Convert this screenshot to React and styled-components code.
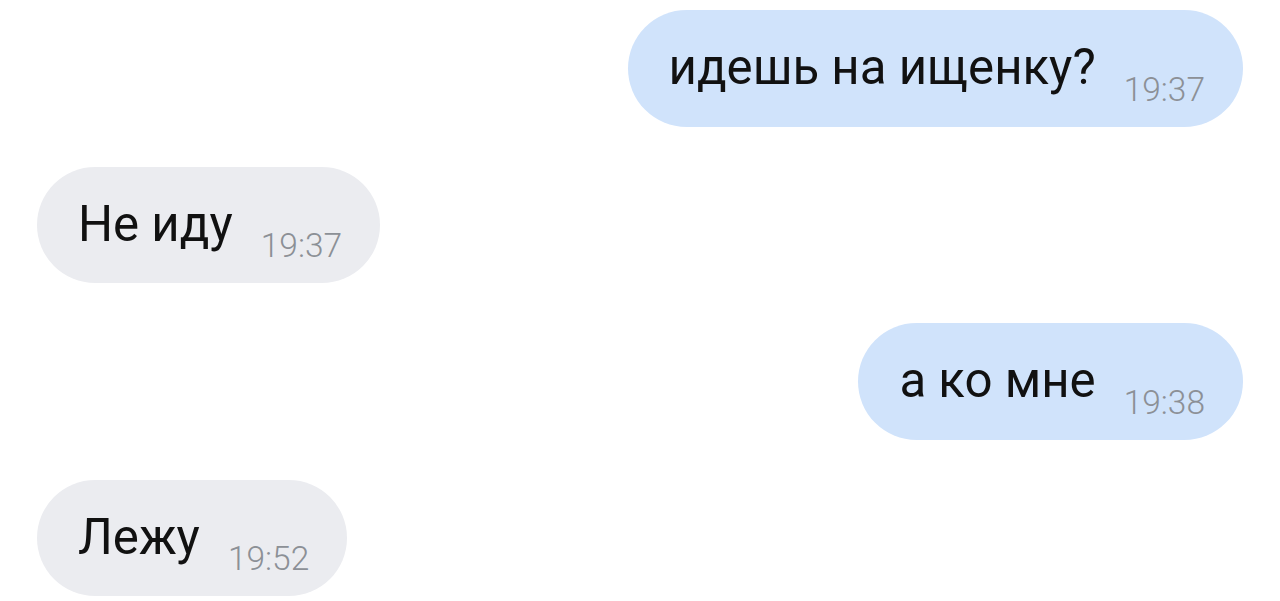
import React from "react";
import styled, { createGlobalStyle } from "styled-components";

const GlobalStyle = createGlobalStyle`
  html, body {
    margin: 0;
    padding: 0;
    background: #ffffff;
  }
  body {
    font-family: Roboto, "Noto Sans", Arial, sans-serif;
  }
`;

const Chat = styled.div`
  display: flex;
  flex-direction: column;
  gap: 40px;
  padding: 10px 37px 0 37px;
`;

const Row = styled.div`
  display: flex;
  justify-content: ${(p) => (p.$out ? "flex-end" : "flex-start")};
`;

const Bubble = styled.div`
  display: flex;
  align-items: flex-end;
  gap: 28px;
  height: 116.5px;
  box-sizing: border-box;
  padding: 28px 38px 14px 41px;
  border-radius: 58.5px;
  background: ${(p) => (p.$out ? "#d0e3fb" : "#ebecf0")};
`;

const Text = styled.span`
  font-family: Roboto, sans-serif;
  font-size: 49.2px;
  line-height: 58px;
  color: #111111;
  margin-bottom: 16.5px;
  white-space: nowrap;
`;

const Time = styled.span`
  font-family: Roboto, sans-serif;
  font-weight: 300;
  font-size: 33.5px;
  line-height: 40px;
  color: #8c9096;
  margin-bottom: 3px;
  white-space: nowrap;
`;

const messages = [
  { out: true, text: "идешь на ищенку?", time: "19:37" },
  { out: false, text: "Не иду", time: "19:37" },
  { out: true, text: "а ко мне", time: "19:38" },
  { out: false, text: "Лежу", time: "19:52" },
];

export default function App() {
  return (
    <>
      <GlobalStyle />
      <Chat>
        {messages.map((m, i) => (
          <Row key={i} $out={m.out}>
            <Bubble $out={m.out}>
              <Text>{m.text}</Text>
              <Time>{m.time}</Time>
            </Bubble>
          </Row>
        ))}
      </Chat>
    </>
  );
}
